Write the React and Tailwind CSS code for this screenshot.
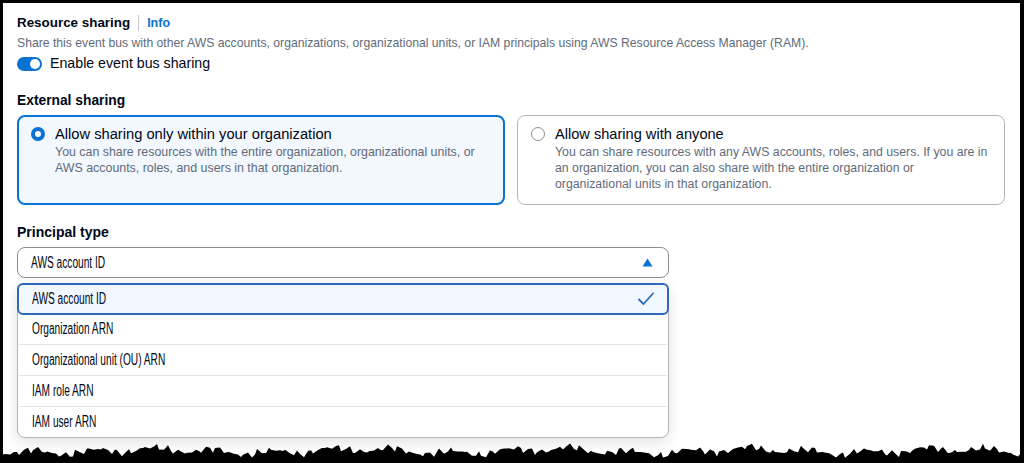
import React from "react";

function tornPoints() {
  const pts = [];
  let x = 0;
  let i = 0;
  while (x <= 1024) {
    const n =
      Math.sin(i * 1.7) * 2 +
      Math.sin(i * 0.37 + 1.3) * 2.6 +
      Math.sin(i * 4.1 + 0.5) * 1.8 +
      Math.sin(i * 0.11) * 1.8;
    const y = 14 + n;
    pts.push(`${x},${y.toFixed(1)}`);
    x += 2 + ((i * 7) % 4);
    i++;
  }
  pts.push("1024,30", "0,30");
  return pts.join(" ");
}

const optionText =
  "inline-block origin-left scale-x-[0.635] whitespace-nowrap text-[16px] text-[#000716]";

function Option({ label, last }) {
  return (
    <div className="flex flex-col">
      <div className="flex h-[30px] items-center pl-[14px]">
        <span className={optionText}>{label}</span>
      </div>
      {!last && <div className="mx-[1px] h-px bg-[#e2e4e7]" />}
    </div>
  );
}

export default function App() {
  return (
    <div
      className="relative h-[463px] w-[1024px] overflow-hidden border-l-[3px] border-r-[4px] border-t-[3px] border-black bg-white"
      style={{ fontFamily: '"Liberation Sans", Arial, sans-serif' }}
    >
      <div className="pl-[14px] pr-[15px] pt-[10px]">
        {/* Header */}
        <div className="flex h-5 items-center">
          <span className="text-[13.4px] font-bold text-[#000716]">Resource sharing</span>
          <span className="mx-[8px] h-[16px] w-px bg-[#c6c6cd]" />
          <span className="text-[12.5px] font-bold text-[#0972d3]">Info</span>
        </div>
        <div className="mt-[2px] text-[12.2px] leading-4 text-[#5f6b7a]">
          Share this event bus with other AWS accounts, organizations, organizational units, or IAM principals using AWS Resource Access Manager (RAM).
        </div>
        {/* Toggle */}
        <div className="mt-[3px] flex h-5 items-center">
          <div className="flex h-[14px] w-[25px] items-center justify-end rounded-full bg-[#0972d3] pr-[2px]">
            <div className="h-[10px] w-[10px] rounded-full bg-white" />
          </div>
          <span className="ml-[8px] text-[14.2px] text-[#000716]">Enable event bus sharing</span>
        </div>
        {/* External sharing */}
        <div className="mt-[17px] flex h-5 items-center text-[13.8px] font-bold text-[#000716]">
          External sharing
        </div>
        <div className="mt-[4px] grid grid-cols-2 gap-3">
          <div className="h-[90px] rounded-lg border-2 border-[#0972d3] bg-[#f2f8fd] pl-[12px] pr-3 pt-[7px]">
            <div className="flex">
              <div className="flex h-5 w-[14px] items-center">
                <div className="h-[14px] w-[14px] rounded-full border-[4px] border-[#0972d3] bg-white" />
              </div>
              <div className="ml-[10px]">
                <div className="h-5 whitespace-nowrap text-[14.7px] leading-5 text-[#000716]">
                  Allow sharing only within your organization
                </div>
                <div className="whitespace-nowrap text-[12.4px] leading-4 text-[#5f6b7a]">
                  You can share resources with the entire organization, organizational units, or
                  <br />
                  AWS accounts, roles, and users in that organization.
                </div>
              </div>
            </div>
          </div>
          <div className="h-[90px] rounded-lg border border-[#b4b4bb] bg-white pl-[13px] pr-3 pt-[8px]">
            <div className="flex">
              <div className="flex h-5 w-[14px] items-center">
                <div className="h-[14px] w-[14px] rounded-full border-[1.5px] border-[#8c8c94] bg-white" />
              </div>
              <div className="ml-[10px]">
                <div className="h-5 whitespace-nowrap text-[14.6px] leading-5 text-[#000716]">
                  Allow sharing with anyone
                </div>
                <div className="whitespace-nowrap text-[12.3px] leading-4 text-[#5f6b7a]">
                  You can share resources with any AWS accounts, roles, and users. If you are in
                  <br />
                  an organization, you can also share with the entire organization or
                  <br />
                  organizational units in that organization.
                </div>
              </div>
            </div>
          </div>
        </div>
        {/* Principal type */}
        <div className="mt-[17px] flex h-5 items-center text-[14px] font-bold text-[#000716]">
          Principal type
        </div>
        <div className="relative mt-[5px] w-[652px]">
          <div className="flex h-[31px] items-center justify-between rounded-lg border border-[#8c8c94] bg-white pl-[13px] pr-[15px]">
            <span className={optionText}>AWS account ID</span>
            <svg width="11" height="9" viewBox="0 0 11 9">
              <polygon points="5.5,0.5 10.5,8.5 0.5,8.5" fill="#0972d3" />
            </svg>
          </div>
          {/* Dropdown menu */}
          <div className="absolute left-0 right-0 top-[36px] rounded-lg border border-[#b4b4bb] bg-white shadow-[0_4px_14px_rgba(0,7,22,0.12)]">
            <div className="-m-px flex h-[32px] items-center justify-between rounded-md border-2 border-[#2f68b8] bg-[#f0f7ff] pl-[13px] pr-[12px]">
              <span className={optionText}>AWS account ID</span>
              <svg width="18" height="16" viewBox="0 0 18 16">
                <path d="M2 8.5 L6.5 13 L16 2.5" fill="none" stroke="#2f68b8" strokeWidth="1.8" strokeLinecap="round" strokeLinejoin="round" />
              </svg>
            </div>
            <Option label="Organization ARN" />
            <Option label="Organizational unit (OU) ARN" />
            <Option label="IAM role ARN" />
            <Option label="IAM user ARN" last />
          </div>
        </div>
      </div>
      {/* torn bottom edge */}
      <svg
        className="absolute bottom-0 left-0"
        width="1024"
        height="26"
        viewBox="0 0 1024 26"
        preserveAspectRatio="none"
      >
        <polygon points={tornPoints()} fill="#000" />
      </svg>
    </div>
  );
}
